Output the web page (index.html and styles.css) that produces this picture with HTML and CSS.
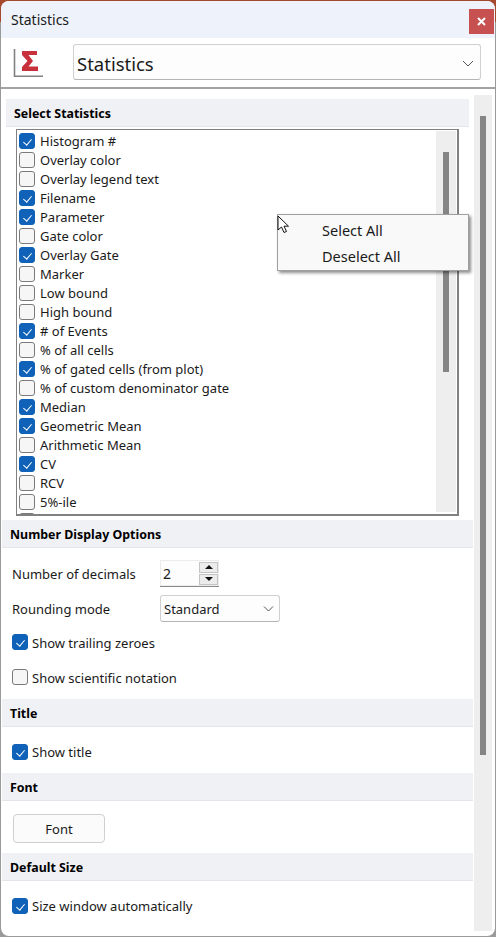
FILE: index.html
```html
<!DOCTYPE html>
<html lang="en">

<head>
    <meta charset="UTF-8">
    <meta name="viewport" content="width=device-width, initial-scale=1.0">
    <title>Statistics</title>

    <link rel="stylesheet" href="styles.css">
</head>

<body>
    <div class="window">
        <div class="titlebar">
            <span class="titlebar-text">Statistics</span>
            <button class="close-btn">
                <svg width="9" height="9" viewBox="0 0 9 9">
                    <path d="M1 1L8 8M8 1L1 8" stroke="#fff" stroke-width="2" fill="none"></path>
                </svg>
            </button>
        </div>

        <div class="toolbar">
            <svg class="stat-icon" width="32" height="32" viewBox="0 0 32 32">
                <path d="M1.5 3V30.2H30" stroke="#808080" stroke-width="1.6" fill="none"></path>
                <path d="M9 5H24V9H15.5L20 15L15.5 20.5H25V25H9V21L14.5 15L9 9Z" fill="#c8303c"></path>
            </svg>
            <div class="big-select">
                <span>Statistics</span>
                <svg width="12" height="7" viewBox="0 0 12 7">
                    <path d="M1 1L6 6L11 1" stroke="#555" stroke-width="1" fill="none"></path>
                </svg>
            </div>
        </div>

        <div class="main">
            <div class="panel">
                <div class="select-stats">
                    <h3 class="section-head first">Select Statistics</h3>
                    <div class="list-box">
                        <div class="list-items">
                            <label class="row"><span class="check on"></span>Histogram #</label>
                            <label class="row"><span class="check"></span>Overlay color</label>
                            <label class="row"><span class="check"></span>Overlay legend text</label>
                            <label class="row"><span class="check on"></span>Filename</label>
                            <label class="row"><span class="check on"></span>Parameter</label>
                            <label class="row"><span class="check"></span>Gate color</label>
                            <label class="row"><span class="check on"></span>Overlay Gate</label>
                            <label class="row"><span class="check"></span>Marker</label>
                            <label class="row"><span class="check"></span>Low bound</label>
                            <label class="row"><span class="check"></span>High bound</label>
                            <label class="row"><span class="check on"></span># of Events</label>
                            <label class="row"><span class="check"></span>% of all cells</label>
                            <label class="row"><span class="check on"></span>% of gated cells (from plot)</label>
                            <label class="row"><span class="check"></span>% of custom denominator gate</label>
                            <label class="row"><span class="check on"></span>Median</label>
                            <label class="row"><span class="check on"></span>Geometric Mean</label>
                            <label class="row"><span class="check"></span>Arithmetic Mean</label>
                            <label class="row"><span class="check on"></span>CV</label>
                            <label class="row"><span class="check"></span>RCV</label>
                            <label class="row"><span class="check"></span>5%-ile</label>
                            <label class="row"><span class="check"></span></label>
                        </div>
                        <div class="list-scroll"><div class="list-thumb"></div></div>
                    </div>
                </div>

                <h3 class="section-head">Number Display Options</h3>
                <div class="number-options">
                    <div class="field">
                        <span class="field-label">Number of decimals</span>
                        <div class="spinner">
                            <span>2</span>
                            <div class="spin-btns">
                                <span class="spin-btn"><i class="tri up"></i></span>
                                <span class="spin-btn"><i class="tri down"></i></span>
                            </div>
                        </div>
                    </div>
                    <div class="field">
                        <span class="field-label">Rounding mode</span>
                        <div class="small-select">
                            <span>Standard</span>
                            <svg width="11" height="6" viewBox="0 0 11 6">
                                <path d="M1 0.5L5.5 5L10 0.5" stroke="#555" stroke-width="1" fill="none"></path>
                            </svg>
                        </div>
                    </div>
                    <label class="option trailing"><span class="check on"></span>Show trailing zeroes</label>
                    <label class="option scientific"><span class="check"></span>Show scientific notation</label>
                </div>

                <h3 class="section-head">Title</h3>
                <div class="single-option">
                    <label class="option"><span class="check on"></span>Show title</label>
                </div>

                <h3 class="section-head">Font</h3>
                <div class="font-option">
                    <button class="font-btn">Font</button>
                </div>

                <h3 class="section-head">Default Size</h3>
                <div class="single-option">
                    <label class="option"><span class="check on"></span>Size window automatically</label>
                </div>
            </div>

            <div class="main-scroll"><div class="main-thumb"></div></div>
        </div>

        <div class="context-menu">
            <div class="menu-item">Select All</div>
            <div class="menu-item">Deselect All</div>
        </div>

        <svg class="cursor" width="13" height="19" viewBox="0 0 13 19">
            <path d="M1 1V15L4.5 12L7 17.5L9.5 16.5L7 11.2H11.5Z" fill="#fff" stroke="#111" stroke-width="1"></path>
        </svg>
    </div>
</body>

</html>
```

FILE: styles.css
```css
* {
    box-sizing: border-box;
}

html,
body {
    margin: 0;
    height: 100%;
}

body {
    background: linear-gradient(#a5492f 0, #a5492f 22px, #9a9a9a 22px);
    font-family: "Noto Sans", "Open Sans", sans-serif;
    font-size: 13px;
    color: #1a1a1a;
    overflow: hidden;
}

.window {
    position: relative;
    width: 494px;
    height: 935px;
    margin: 1px 0 0 1px;
    background-color: #fff;
    border-radius: 8px 8px 8px 8px;
    display: flex;
    flex-direction: column;
    overflow: hidden;
}

.titlebar {
    height: 37px;
    flex: none;
    background-color: #eef2fb;
    display: flex;
    align-items: center;
    justify-content: space-between;
    padding: 0 0 0 10px;
}

.titlebar-text {
    font-size: 14px;
}

.close-btn {
    width: 25px;
    height: 25px;
    margin: 4px 1px 0 0;
    border: none;
    padding: 0;
    background-color: #c75050;
    display: flex;
    align-items: center;
    justify-content: center;
}

.toolbar {
    height: 51px;
    flex: none;
    display: flex;
    align-items: center;
    gap: 28px;
    padding: 0 14px 1px 12px;
    border-bottom: 2px solid #a3a3a3;
}

.stat-icon {
    flex: none;
}

.big-select {
    flex: 1;
    height: 36px;
    border: 1px solid #d0d0d0;
    border-bottom-color: #b5b5b5;
    border-radius: 3px;
    background-color: #fdfdfd;
    display: flex;
    align-items: center;
    justify-content: space-between;
    padding: 2px 6px 0 3px;
    font-size: 18.5px;
}

.main {
    flex: 1;
    display: flex;
    min-height: 0;
}

.panel {
    width: 472px;
    flex: none;
    padding-top: 10px;
}

.section-head {
    margin: 0 0 0 1px;
    height: 28px;
    line-height: 27px;
    padding: 1px 0 0 8px;
    font-size: 12.4px;
    font-weight: 700;
    background-color: #f0f1f5;
    border-bottom: 1px solid #e4e4ea;
    color: #000;
}

.section-head.first {
    margin-left: 5px;
    margin-right: 4px;
}

.select-stats {
    margin-bottom: 4px;
}

.list-box {
    margin: 2px 14px 0 15px;
    height: 387px;
    border: 1px solid #808080;
    border-width: 1px 2px 2px 1px;
    display: flex;
    overflow: hidden;
}

.list-items {
    flex: 1;
    padding-top: 1px;
    min-width: 0;
}

.row {
    height: 19px;
    display: flex;
    align-items: center;
    gap: 5px;
    padding-left: 2px;
    white-space: nowrap;
}

.check {
    position: relative;
    width: 16px;
    height: 16px;
    flex: none;
    border: 1px solid #7a7a7a;
    border-radius: 3px;
    background-color: #f6f6f6;
}

.check.on {
    background-color: #0f62b8;
    border-color: #0f62b8;
}

.check.on::after {
    content: "";
    position: absolute;
    left: 5px;
    top: 3px;
    width: 4px;
    height: 7px;
    border: solid #fff;
    border-width: 0 1px 1px 0;
    transform: rotate(40deg);
}

.list-scroll {
    width: 20px;
    flex: none;
    background-color: #eeeeee;
    margin: 1px 1px 2px 0;
    padding: 21px 0 0 7px;
}

.list-thumb {
    width: 6px;
    height: 220px;
    background-color: #858585;
}

.number-options {
    height: 151px;
    padding: 12px 0 0 11px;
}

.field {
    display: flex;
    align-items: center;
    height: 27px;
    margin-bottom: 8px;
}

.field-label {
    width: 148px;
    flex: none;
}

.spinner {
    width: 59px;
    height: 27px;
    border-bottom: 1px solid #8a8a8a;
    background-color: #fdfdfd;
    display: flex;
    align-items: center;
    justify-content: space-between;
    padding: 0 1px 0 3px;
    box-shadow: 0 0 0 1px #ececec inset;
    font-size: 14px;
}

.spin-btns {
    display: flex;
    flex-direction: column;
    gap: 1px;
}

.spin-btn {
    width: 19px;
    height: 11px;
    background-color: #ececec;
    border: 1px solid #c4c4c4;
    display: flex;
    align-items: center;
    justify-content: center;
}

.tri {
    width: 0;
    height: 0;
    border-left: 4px solid transparent;
    border-right: 4px solid transparent;
}

.tri.up {
    border-bottom: 4px solid #111;
}

.tri.down {
    border-top: 4px solid #111;
}

.small-select {
    width: 120px;
    height: 27px;
    border: 1px solid #d0d0d0;
    border-bottom-color: #b5b5b5;
    border-radius: 3px;
    background-color: #fdfdfd;
    display: flex;
    align-items: center;
    justify-content: space-between;
    padding: 0 5px 0 3px;
}

.option {
    display: flex;
    align-items: center;
    gap: 4px;
    height: 18px;
}

.trailing {
    margin-top: 11px;
    padding-top: 2px;
}

.scientific {
    margin-top: 17px;
    padding-top: 2px;
}

.trailing .check,
.scientific .check {
    margin-top: -2px;
}

.single-option {
    height: 46px;
    padding: 16px 0 0 11px;
}

.font-option {
    height: 52px;
    padding: 13px 0 0 12px;
}

.font-btn {
    width: 92px;
    height: 29px;
    border: 1px solid #cfcfcf;
    border-radius: 4px;
    background-color: #fbfbfb;
    font: inherit;
    color: #1a1a1a;
}

.main-scroll {
    width: 18px;
    margin: 6px 0 5px 1px;
    background-color: #eeeeee;
    padding: 21px 0 0 6px;
    flex: none;
}

.main-thumb {
    width: 6px;
    height: 639px;
    background-color: #858585;
}

.context-menu {
    position: absolute;
    left: 276px;
    top: 213px;
    width: 192px;
    height: 57px;
    border: 1px solid #a0a0a0;
    background-color: #f9f9f9;
    box-shadow: 2px 2px 3px rgba(0, 0, 0, 0.45);
    padding: 2px 0 0 44px;
    font-size: 14.5px;
}

.menu-item {
    height: 26px;
    line-height: 26px;
}

.cursor {
    position: absolute;
    left: 276px;
    top: 214px;
}
```
